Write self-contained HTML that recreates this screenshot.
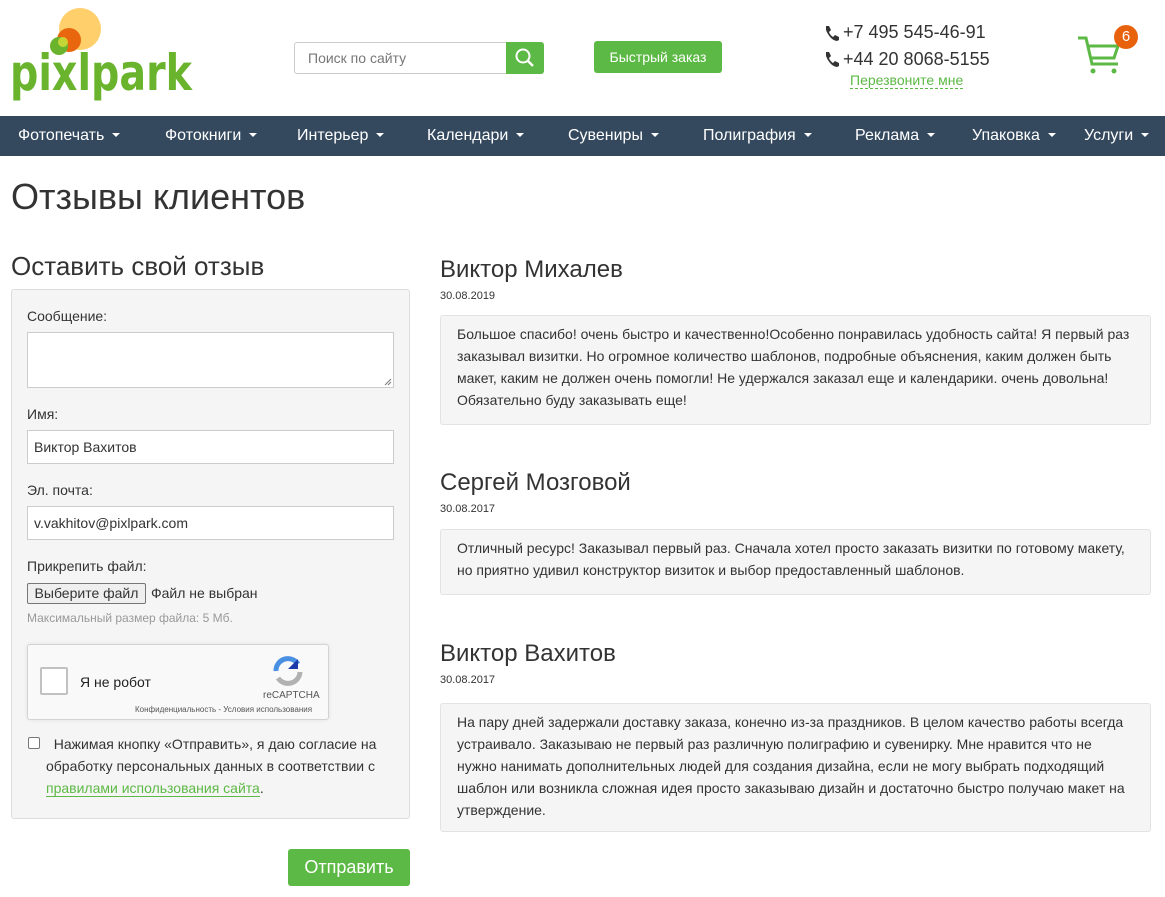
<!DOCTYPE html>
<html><head><meta charset="utf-8"><style>
*{box-sizing:border-box;margin:0;padding:0}
body{width:1165px;height:897px;font-family:"Liberation Sans",Arial,sans-serif;color:#333;background:#fff;position:relative;overflow:hidden}
.a{position:absolute}
.nav{left:0;top:116px;width:1165px;height:40px;background:#34495e}
.nav span{position:absolute;top:11px;color:#fff;font-size:16px;white-space:nowrap}
.nav span:after{content:"";display:inline-block;margin-left:8px;vertical-align:3px;border-left:4px solid transparent;border-right:4px solid transparent;border-top:4px solid #fff}
.lbl{font-size:14px;color:#333}
.inp{background:#fff;border:1px solid #ccc;font-size:14px;padding:0 6px;line-height:32px;height:34px}
.rev{left:440px;width:711px;background:#f5f5f5;border:1px solid #e3e3e3;border-radius:3px;font-size:14px;line-height:22px;padding:7px 16px;color:#333}
.rn{left:440px;font-size:24px;color:#333}
.rd{left:440px;font-size:11px;color:#333}
</style></head><body>
<svg class="a" style="left:0;top:0" width="200" height="110">
<circle cx="80" cy="29" r="21" fill="#fecf6b"/>
<circle cx="69" cy="40" r="12" fill="#e8660e"/>
<circle cx="59" cy="46" r="9" fill="#6ab42d"/>
<circle cx="63" cy="42" r="5" fill="#d9de3a" opacity=".8"/>
<text x="10" y="90" font-family="DejaVu Sans,Liberation Sans,sans-serif" font-weight="bold" font-size="50" fill="#6ab42d" textLength="182" lengthAdjust="spacingAndGlyphs">pixlpark</text>
</svg>
<div class="a inp" style="left:294px;top:42px;width:214px;height:32px;line-height:30px;color:#777;padding-left:13px;border-radius:3px 0 0 3px">Поиск по сайту</div>
<div class="a" style="left:506px;top:42px;width:38px;height:32px;background:#5cb945;border-radius:0 3px 3px 0"><svg width="38" height="32"><circle cx="17" cy="14" r="6.5" stroke="#fff" stroke-width="2" fill="none"/><line x1="22" y1="19" x2="27" y2="24" stroke="#fff" stroke-width="2.4"/></svg></div>
<div class="a" style="left:594px;top:41px;width:128px;height:32px;background:#5cb945;border-radius:3px;color:#fff;font-size:14px;text-align:center;line-height:32px">Быстрый заказ</div>
<svg class="a" style="left:823px;top:25px" width="16" height="45"><path d="M3 1l3 0 2 4-2 2q1 3 4 5l2-2 4 2 0 3-2 1q-7-1-11-11z" fill="#333"/><path d="M3 27l3 0 2 4-2 2q1 3 4 5l2-2 4 2 0 3-2 1q-7-1-11-11z" fill="#333"/></svg>
<div class="a" style="left:843px;top:22px;font-size:18px;color:#333">+7 495 545-46-91</div>
<div class="a" style="left:843px;top:49px;font-size:18px;color:#333">+44 20 8068-5155</div>
<div class="a" style="left:850px;top:72px;font-size:14px;color:#5cb945;border-bottom:1px dashed #5cb945;line-height:16px">Перезвоните мне</div>
<svg class="a" style="left:1076px;top:34px" width="46" height="42"><path d="M2 4h8l6 26h26M12 12h30l-4 12H15" stroke="#5cb945" stroke-width="3" fill="none"/><circle cx="17" cy="37" r="2.5" fill="#5cb945"/><circle cx="38" cy="37" r="2.5" fill="#5cb945"/></svg>
<div class="a" style="left:1114px;top:25px;width:24px;height:24px;border-radius:12px;background:#e8620e;color:#fff;font-size:15px;text-align:center;line-height:24px">6</div>
<div class="a nav">
<span style="left:18px">Фотопечать</span><span style="left:165px">Фотокниги</span><span style="left:297px">Интерьер</span><span style="left:427px">Календари</span><span style="left:568px">Сувениры</span><span style="left:703px">Полиграфия</span><span style="left:855px">Реклама</span><span style="left:972px">Упаковка</span><span style="left:1084px">Услуги</span>
</div>
<div class="a" style="left:11px;top:176px;font-size:36px;color:#333">Отзывы клиентов</div>
<div class="a" style="left:11px;top:251px;font-size:26px;color:#333">Оставить свой отзыв</div>
<div class="a" style="left:11px;top:289px;width:399px;height:530px;background:#f5f5f5;border:1px solid #ddd;border-radius:3px"></div>
<div class="a lbl" style="left:27px;top:308px">Сообщение:</div>
<div class="a inp" style="left:27px;top:332px;width:367px;height:56px"></div>
<svg class="a" style="left:384px;top:378px" width="8" height="8"><path d="M7 1L1 7M7 4L4 7" stroke="#777"/></svg>
<div class="a lbl" style="left:27px;top:406px">Имя:</div>
<div class="a inp" style="left:27px;top:430px;width:367px">Виктор Вахитов</div>
<div class="a lbl" style="left:27px;top:482px">Эл. почта:</div>
<div class="a inp" style="left:27px;top:506px;width:367px">v.vakhitov@pixlpark.com</div>
<div class="a lbl" style="left:27px;top:558px">Прикрепить файл:</div>
<div class="a" style="left:27px;top:583px;width:119px;height:21px;border:1px solid #767676;background:#efefef;border-radius:2px;font-size:14px;text-align:center;line-height:19px">Выберите файл</div>
<div class="a lbl" style="left:151px;top:585px">Файл не выбран</div>
<div class="a" style="left:27px;top:611px;font-size:12px;color:#999">Максимальный размер файла: 5 Мб.</div>
<div class="a" style="left:27px;top:644px;width:302px;height:76px;background:#f9f9f9;border:1px solid #d3d3d3;border-radius:3px;box-shadow:0 0 4px rgba(0,0,0,.08)"></div>
<div class="a" style="left:40px;top:667px;width:28px;height:28px;border:2px solid #c1c1c1;background:#fff;border-radius:2px"></div>
<div class="a" style="left:80px;top:674px;font-size:14px;color:#222">Я не робот</div>
<svg class="a" style="left:272px;top:655px" width="34" height="32"><path d="M4 16a12 12 0 0 1 22-7" stroke="#4a90e2" stroke-width="5" fill="none"/><path d="M26 4v10h-10z" fill="#1c3aa9"/><path d="M28 17a12 12 0 0 1-22 6" stroke="#b1b1b1" stroke-width="5" fill="none"/></svg>
<div class="a" style="left:263px;top:690px;font-size:10px;color:#555">reCAPTCHA</div>
<div class="a" style="left:135px;top:705px;font-size:8px;color:#555">Конфиденциальность - Условия использования</div>
<div class="a" style="left:28px;top:737px;width:12px;height:12px;border:1px solid #767676;background:#fff;border-radius:2px"></div>
<div class="a" style="left:46px;top:733px;width:350px;font-size:14px;line-height:22px;color:#333">&nbsp;&nbsp;Нажимая кнопку «Отправить», я даю согласие на обработку персональных данных в соответствии с <span style="color:#5cb945;border-bottom:1px solid #5cb945">правилами использования сайта</span>.</div>
<div class="a" style="left:288px;top:849px;width:122px;height:37px;background:#5cb945;border-radius:3px;color:#fff;font-size:18px;text-align:center;line-height:37px">Отправить</div>

<div class="a rn" style="top:256px">Виктор Михалев</div>
<div class="a rd" style="top:290px">30.08.2019</div>
<div class="a rev" style="top:315px;height:110px">Большое спасибо! очень быстро и качественно!Особенно понравилась удобность сайта! Я первый раз заказывал визитки. Но огромное количество шаблонов, подробные объяснения, каким должен быть макет, каким не должен очень помогли! Не удержался заказал еще и календарики. очень довольна! Обязательно буду заказывать еще!</div>
<div class="a rn" style="top:469px">Сергей Мозговой</div>
<div class="a rd" style="top:503px">30.08.2017</div>
<div class="a rev" style="top:529px;height:66px">Отличный ресурс! Заказывал первый раз. Сначала хотел просто заказать визитки по готовому макету, но приятно удивил конструктор визиток и выбор предоставленный шаблонов.</div>
<div class="a rn" style="top:640px">Виктор Вахитов</div>
<div class="a rd" style="top:674px">30.08.2017</div>
<div class="a rev" style="top:703px;height:129px">На пару дней задержали доставку заказа, конечно из-за праздников. В целом качество работы всегда устраивало. Заказываю не первый раз различную полиграфию и сувенирку. Мне нравится что не нужно нанимать дополнительных людей для создания дизайна, если не могу выбрать подходящий шаблон или возникла сложная идея просто заказываю дизайн и достаточно быстро получаю макет на утверждение.</div>
</body></html>
